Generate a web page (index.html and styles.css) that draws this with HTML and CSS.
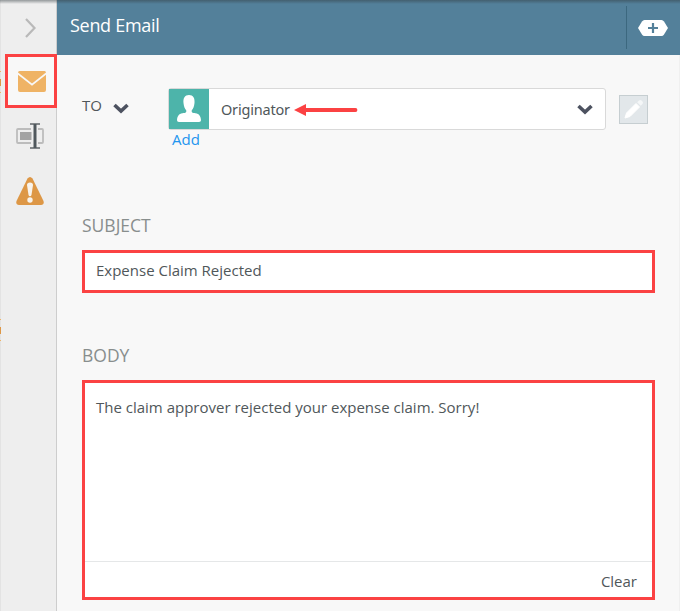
FILE: index.html
```html
<!DOCTYPE html>
<html lang="en">
<head>
<meta charset="utf-8">
<title>Send Email</title>
<link rel="stylesheet" href="styles.css">
</head>
<body>
<div class="app">
  <nav class="rail">
    <button class="rail-item toggle" aria-label="Expand">
      <svg width="14" height="20" viewBox="0 0 14 20"><path d="M2 1l8.500 9L2 19" fill="none" stroke="#b9b9b9" stroke-width="2.200"/></svg>
    </button>
    <button class="rail-item selected" aria-label="Email">
      <svg width="28" height="21" viewBox="0 0 28 21"><path d="M1.500 0h25Q28 0 28 1.500L14 12.500 0 1.500Q0 0 1.500 0Z" fill="#efb365"/><path d="M0 3.700L14 14.700 28 3.700V19q0 2-2 2H2q-2 0-2-2Z" fill="#efb365"/></svg>
    </button>
    <button class="rail-item rename" aria-label="Fields">
      <svg width="28" height="26" viewBox="0 0 28 26"><path d="M15 6H2Q1 6 1 7v12q0 1 1 1h13M22 6h4q1 0 1 1v12q0 1-1 1h-4" fill="none" stroke="#bcbcbc" stroke-width="1.800"/><rect x="4" y="9" width="11.500" height="8" fill="#a3a3a3"/><path d="M14 1h10M14 25h10" stroke="#83878a" stroke-width="2"/><path d="M19 1v24" stroke="#50585d" stroke-width="3"/></svg>
    </button>
    <button class="rail-item warning" aria-label="Errors">
      <svg width="28" height="28" viewBox="0 0 28 28"><path d="M11.500 1.500Q14-1.500 16.500 1.500L27.500 24Q28.500 28 25 28H3Q-.5 28 .5 24Z" fill="#dd9746"/><path d="M11 8q0-2.500 3-2.500T17 8l-1.500 10q-.4 1.200-1.500 1.200T12.500 18Z" fill="#f8f3ec"/><circle cx="14" cy="23" r="2.700" fill="#f8f3ec"/></svg>
    </button>
    <i class="trace trace-top"></i><i class="trace trace-bottom"></i>
  </nav>
  <main class="panel">
    <header class="header">
      <h1 class="title">Send Email</h1>
      <button class="add-step" aria-label="Add">
        <svg width="30" height="16" viewBox="0 0 30 16"><path d="M6.500 0h17Q25 0 26 1.500L30 8l-4 6.500Q25 16 23.500 16h-17Q5 16 4 14.500L0 8l4-6.500Q5 0 6.500 0Z" fill="#fff"/><path d="M15 3v10M10 8h10" stroke="#53809a" stroke-width="2.200"/></svg>
      </button>
    </header>
    <form class="form">
      <div class="to-row">
        <div class="to-label"><span>TO</span>
          <svg width="16" height="11" viewBox="0 0 16 11"><path d="M1.500 2L8 8l6.500-6" fill="none" stroke="#4d5260" stroke-width="3.600"/></svg>
        </div>
        <div class="recipient">
          <div class="picker">
            <span class="avatar"><svg width="24" height="28" viewBox="0 0 24 28"><path d="M12 0c4.200 0 6 3.200 5.500 8-.4 3.700-1.300 5.700-2.700 7.300-.5 2 .4 2.700 3.700 2.900 3.700.3 5.300 3.200 5.500 7Q24 27 22 27H2q-2 0-2-1.800c.2-3.800 1.800-6.700 5.500-7 3.300-.2 4.200-.9 3.700-2.900C7.800 13.700 6.900 11.700 6.500 8 6 3.200 7.800 0 12 0Z" fill="#fff"/></svg></span>
            <span class="recipient-name">Originator</span>
            <svg class="arrow" width="64" height="12" viewBox="0 0 64 12"><path d="M0 6L12 0v12Z" fill="#fb4243"/><path d="M10 6h51.500" stroke="#fb4243" stroke-width="3.800" stroke-linecap="round"/></svg>
            <svg class="caret" width="16" height="11" viewBox="0 0 16 11"><path d="M1.500 2L8 8l6.500-6" fill="none" stroke="#4d5260" stroke-width="3.600"/></svg>
          </div>
          <a class="add-link">Add</a>
        </div>
        <button class="edit" type="button" aria-label="Edit">
          <svg width="27" height="27" viewBox="0 0 27 27"><path d="M5 22l1.500-5L16 7.500l3.500 3.500L10 20.500Z" fill="#fff" stroke="#fff" stroke-linejoin="round"/><path d="M17.200 6.300L19 4.500q1.200-1 2.500 0l1 1q1 1.300 0 2.500l-1.800 1.800Z" fill="#f5f7f8"/></svg>
        </button>
      </div>
      <label class="label subject-label">SUBJECT</label>
      <div class="field subject">Expense Claim Rejected</div>
      <label class="label body-label">BODY</label>
      <div class="field body">
        <div class="message">The claim approver rejected your expense claim. Sorry!</div>
        <div class="footer"><span>Clear</span></div>
      </div>
    </form>
  </main>
</div>
</body>
</html>
```
FILE: styles.css
```css
* { box-sizing: border-box; }
body { margin: 0; font-family: "Open Sans", "Noto Sans", sans-serif; font-size: 15px; color: #50575a; background: #f8f8f8; }
svg { display: block; flex: none; }
button { border: 0; padding: 0; background: none; }
.app { display: grid; grid-template-columns: 57px 1fr; width: 680px; height: 611px; overflow: hidden; position: relative; }
.app::before { content: ""; position: absolute; z-index: 2; inset: 0 0 auto; height: 4px; background: linear-gradient(rgba(50,60,65,.48), transparent); }
.rail { position: relative; display: flex; flex-direction: column; background: #eee; border-left: 1px solid #e3e3e3; border-right: 1px solid #cdcdcd; }
.rail-item { display: flex; align-items: center; justify-content: center; }
.toggle { height: 54px; padding: 1px 0 0 5px; }
.selected { width: 52px; height: 54px; margin-left: 4px; margin-right: -1px; background: #f8f8f8; border: 3px solid #fb4243; position: relative; z-index: 1; padding: 1px 0 0 2px; }
.rename { height: 56px; padding-left: 3px; }
.warning { height: 54px; padding-left: 3px; }
.trace { position: absolute; left: -1px; width: 1px; height: 22px; background: linear-gradient(#efb365 0 1px, transparent 1px 8px, #dd9746 8px 15px, transparent 15px 21px, #efb365 21px); }
.trace-top { top: 71px; }
.trace-bottom { top: 319px; }
.panel { min-width: 0; border-right: 1px solid #f0f0f0; }
.header { display: flex; height: 55px; margin-right: -1px; background: #53809a; color: #fff; }
.title { flex: 1; margin: 0; padding: 13px 0 0 13px; font-size: 18px; line-height: 25px; font-weight: 400; letter-spacing: -.3px; }
.add-step { width: 54px; height: 43px; margin-top: 6px; padding-right: 1px; border-left: 1px solid #3c687f; display: flex; align-items: center; justify-content: center; }
.form { padding: 33px 24px 0 25px; }
.to-row { display: flex; height: 126px; }
.to-label { width: 86px; display: flex; gap: 11px; height: 34px; align-items: center; font-size: 15px; }
.to-label svg { margin-top: 7px; }
.recipient { width: 438px; }
.picker { display: flex; align-items: center; height: 42px; background: #fff; border: 1px solid #d9d9d9; border-radius: 3px; }
.avatar { width: 40px; height: 40px; background: #4db4aa; display: flex; align-items: center; justify-content: center; }
.recipient-name { width: 73px; margin-left: 12px; font-family: "Noto Sans", sans-serif; font-size: 14.5px; letter-spacing: -.2px; }
.arrow { margin-top: 2px; }
.caret { margin: 1px 12px 0 auto; }
.add-link { display: block; padding-left: 4px; line-height: 18px; color: #2395ef; }
.edit { width: 29px; height: 29px; margin: 7px 0 0 13px; background: #e2e7ea; border: 1px solid #c6ced1; }
.label { display: block; height: 36px; line-height: 22px; font-size: 17.5px; letter-spacing: 0; color: #888e8d; }
.field { width: 573px; background: #fff; border: 3px solid #fb4243; }
.subject { height: 43px; padding: 6px 11px; line-height: 22px; }
.body-label { margin-top: 51px; }
.body { height: 220px; display: flex; flex-direction: column; }
.message { flex: 1; padding: 13px 11px; line-height: 22px; }
.footer { height: 36px; border-top: 1px solid #e5e7e8; padding: 8px 15px 0; text-align: right; line-height: 22px; }
```
